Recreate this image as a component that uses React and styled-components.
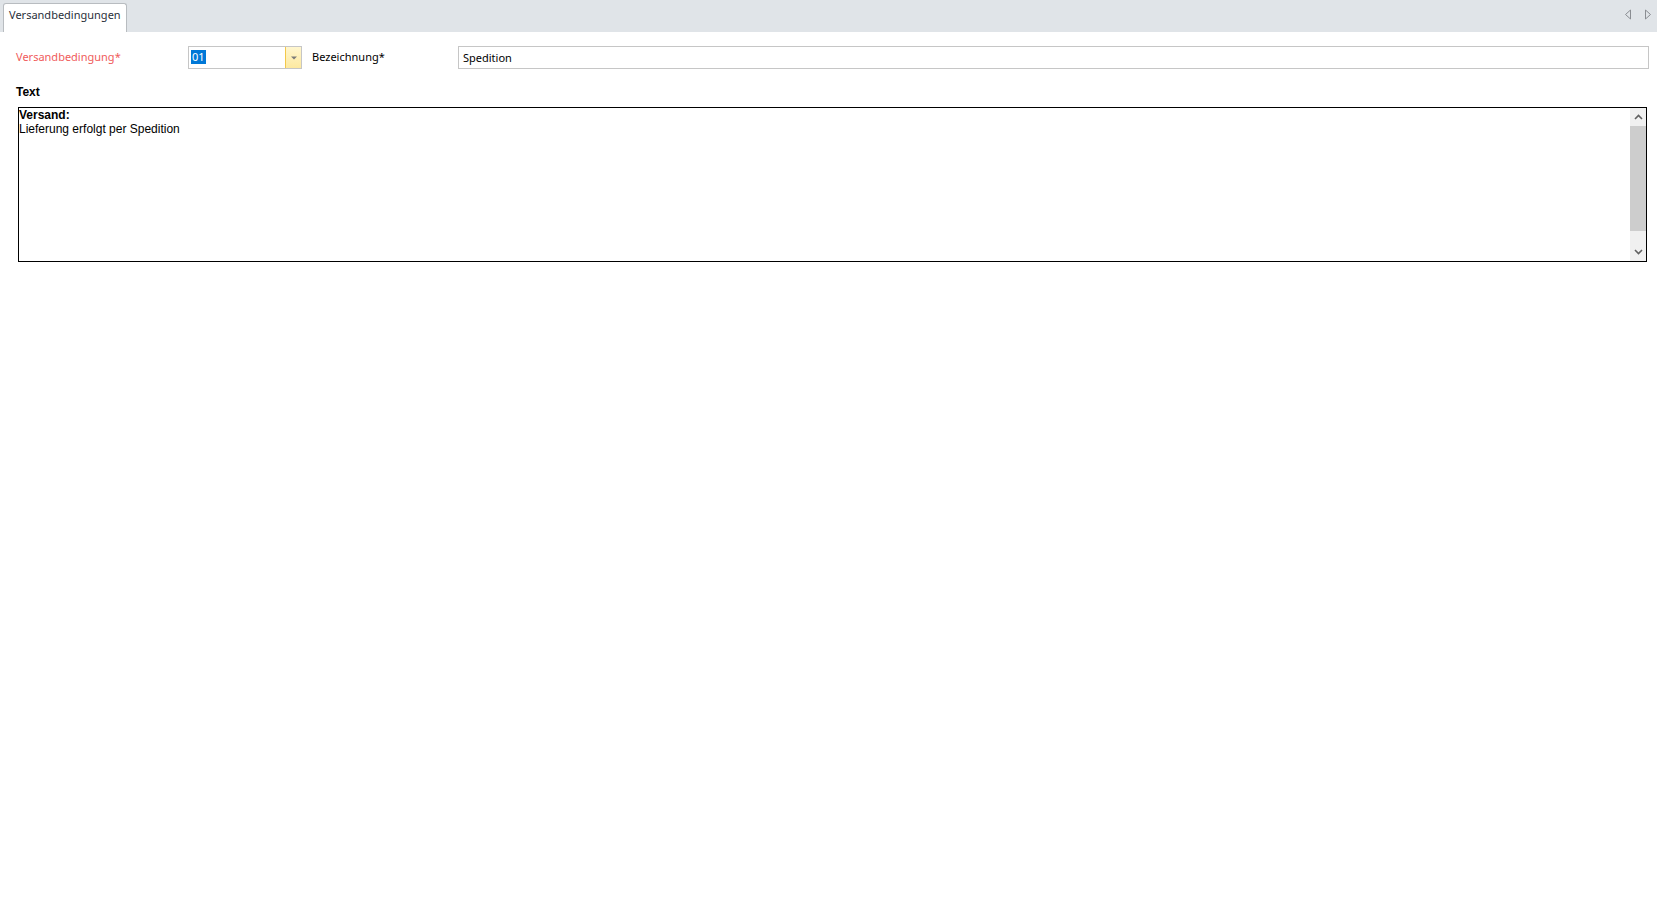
import React from "react";
import styled, { createGlobalStyle } from "styled-components";

const Global = createGlobalStyle`
  html, body { margin: 0; padding: 0; background: #ffffff; }
  body { font-family: "Noto Sans", "Open Sans", sans-serif; font-size: 11px; color: #000; }
`;

const Page = styled.div`
  width: 1657px;
  min-height: 898px;
  background: #fff;
`;

const TabBar = styled.div`
  height: 32px;
  background: #e0e4e8;
  display: flex;
  align-items: flex-end;
  padding-left: 3px;
  box-sizing: border-box;
`;

const Tab = styled.div`
  height: 29px;
  box-sizing: border-box;
  background: #fff;
  border: 1px solid #b8bcc0;
  border-bottom: none;
  border-radius: 3px 3px 0 0;
  padding: 0 5px 7px 5px;
  display: flex;
  align-items: center;
  font-size: 11px;
  color: #2a2f3a;
`;

const TabNav = styled.div`
  margin-left: auto;
  align-self: stretch;
  display: flex;
  align-items: center;
  gap: 12px;
  padding-right: 5px;
  padding-bottom: 4px;
`;

const Arrow = ({ dir }) => (
  <svg width="8" height="11" viewBox="0 0 8 11">
    {dir === "left" ? (
      <path d="M6.5 1 L1.5 5.5 L6.5 10 Z" fill="none" stroke="#8a8d92" strokeWidth="1" />
    ) : (
      <path d="M1.5 1 L6.5 5.5 L1.5 10 Z" fill="none" stroke="#8a8d92" strokeWidth="1" />
    )}
  </svg>
);

const Content = styled.div`
  padding: 14px 8px 0 16px;
`;

const FormRow = styled.div`
  display: grid;
  grid-template-columns: 172px 114px 10px 146px 1fr;
  align-items: center;
  height: 23px;
`;

const Label = styled.label`
  grid-column: ${(p) => p.$col || 1};
  font-size: 11px;
  color: ${(p) => (p.$required ? "#f05b5b" : "#000")};
  margin-top: -2px;
`;

const ComboBox = styled.div`
  grid-column: 2;
  height: 23px;
  box-sizing: border-box;
  border: 1px solid #c6c6c6;
  display: flex;
  background: #fff;
`;

const ComboValue = styled.div`
  flex: 1;
  display: flex;
  align-items: center;
  padding-left: 2px;
  padding-bottom: 1px;
`;

const Selected = styled.span`
  background: #0078d7;
  color: #fff;
  font-size: 11px;
  line-height: 14px;
  padding: 0 1px;
`;

const ComboButton = styled.div`
  width: 15px;
  border-left: 1px solid #f3c84a;
  background: linear-gradient(#fff6cf, #fde9a0);
  display: flex;
  align-items: center;
  justify-content: center;
`;

const TextInput = styled.div`
  grid-column: 5;
  height: 23px;
  box-sizing: border-box;
  border: 1px solid #c6c6c6;
  display: flex;
  align-items: center;
  padding-left: 4px;
  padding-bottom: 1px;
  font-size: 11px;
`;

const SectionLabel = styled.div`
  margin-top: 16px;
  font-family: "Liberation Sans", Arial, sans-serif;
  font-weight: bold;
  font-size: 12px;
  line-height: 14px;
`;

const Editor = styled.div`
  margin-top: 8px;
  margin-left: 2px;
  margin-right: 2px;
  height: 155px;
  box-sizing: border-box;
  border: 1px solid #000;
  display: flex;
`;

const EditorText = styled.div`
  flex: 1;
  font-family: "Liberation Sans", Arial, sans-serif;
  font-size: 12px;
  line-height: 14px;
`;

const Bold = styled.div`
  font-weight: bold;
`;

const ScrollBar = styled.div`
  width: 16px;
  background: #f0f0f0;
  display: flex;
  flex-direction: column;
`;

const ScrollBtn = styled.div`
  height: 18px;
  display: flex;
  align-items: center;
  justify-content: center;
`;

const Thumb = styled.div`
  height: 105px;
  background: #cdcdcd;
`;

const Track = styled.div`
  flex: 1;
`;

const Chevron = ({ up }) => (
  <svg width="9" height="6" viewBox="0 0 9 6">
    <path
      d={up ? "M1 5 L4.5 1.5 L8 5" : "M1 1 L4.5 4.5 L8 1"}
      fill="none"
      stroke="#606060"
      strokeWidth="1.6"
    />
  </svg>
);

export default function App() {
  return (
    <Page>
      <Global />
      <TabBar>
        <Tab>Versandbedingungen</Tab>
        <TabNav>
          <Arrow dir="left" />
          <Arrow dir="right" />
        </TabNav>
      </TabBar>
      <Content>
        <FormRow>
          <Label $required>Versandbedingung*</Label>
          <ComboBox>
            <ComboValue>
              <Selected>01</Selected>
            </ComboValue>
            <ComboButton>
              <svg width="6" height="4" viewBox="0 0 6 4">
                <path d="M0 0.5 L6 0.5 L3 3.5 Z" fill="#7a7a7a" />
              </svg>
            </ComboButton>
          </ComboBox>
          <Label $col={4}>Bezeichnung*</Label>
          <TextInput>Spedition</TextInput>
        </FormRow>
        <SectionLabel>Text</SectionLabel>
        <Editor>
          <EditorText>
            <Bold>Versand:</Bold>
            <div>Lieferung erfolgt per Spedition</div>
          </EditorText>
          <ScrollBar>
            <ScrollBtn>
              <Chevron up />
            </ScrollBtn>
            <Thumb />
            <Track />
            <ScrollBtn>
              <Chevron />
            </ScrollBtn>
          </ScrollBar>
        </Editor>
      </Content>
    </Page>
  );
}
